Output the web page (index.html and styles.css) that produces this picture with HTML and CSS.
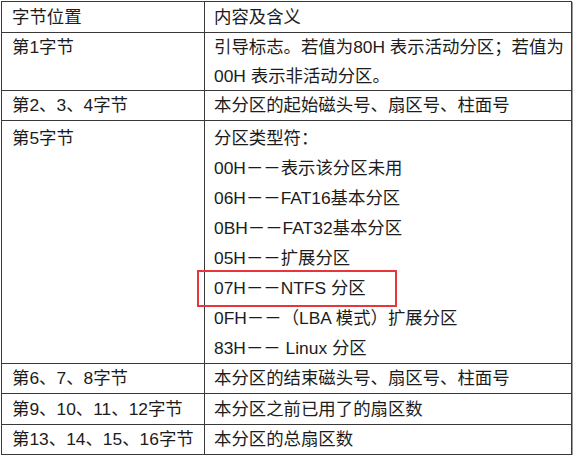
FILE: index.html
```html
<!DOCTYPE html>
<html lang="zh">
<head>
<meta charset="utf-8">
<link rel="stylesheet" href="styles.css">
</head>
<body>
<table class="tbl">
  <colgroup><col class="c1"><col class="c2"></colgroup>
  <tr class="r-head"><td>字节位置</td><td>内容及含义</td></tr>
  <tr class="r-two"><td>第1字节</td><td>引导标志。若值为80H 表示活动分区；若值为<br>00H 表示非活动分区。</td></tr>
  <tr class="r-a"><td>第2、3、4字节</td><td>本分区的起始磁头号、扇区号、柱面号</td></tr>
  <tr class="r-list"><td>第5字节</td><td>
    <div class="line">分区类型符：</div>
    <div class="line">00H－－表示该分区未用</div>
    <div class="line">06H－－FAT16基本分区</div>
    <div class="line">0BH－－FAT32基本分区</div>
    <div class="line">05H－－扩展分区</div>
    <div class="line mark">07H－－NTFS 分区<span class="box"></span></div>
    <div class="line">0FH－－（LBA 模式）扩展分区</div>
    <div class="line">83H－－ Linux 分区</div>
  </td></tr>
  <tr class="r-a"><td>第6、7、8字节</td><td>本分区的结束磁头号、扇区号、柱面号</td></tr>
  <tr class="r-b"><td>第9、10、11、12字节</td><td>本分区之前已用了的扇区数</td></tr>
  <tr class="r-a"><td>第13、14、15、16字节</td><td>本分区的总扇区数</td></tr>
</table>
</body>
</html>
```
FILE: styles.css
```css
html, body {
  margin: 0;
  padding: 0;
  background: #ffffff;
}
body {
  padding: 1px 0 0 1px;
  font-family: "Liberation Sans", "Noto Sans CJK SC", sans-serif;
  font-size: 17.4px;
  color: #1c1c1c;
}
.tbl {
  border-collapse: collapse;
  table-layout: fixed;
  width: 570px;
  box-shadow: 1px 1px 0 #9a9a9a;
}
.c1 { width: 203px; }
.c2 { width: 367px; }
.tbl td {
  border: 1px solid #3a3a3a;
  padding: 0 0 0 10px;
  vertical-align: top;
  line-height: 29px;
  white-space: nowrap;
}
.tbl td + td { padding-left: 9px; }
.r-head td { line-height: 30px; }
.r-two td { line-height: 28.5px; }
.r-a td { line-height: 29px; }
.r-b td { line-height: 30px; }
.r-list td { padding-top: 2px; line-height: 30px; }
.line { height: 30px; }
.mark { position: relative; }
.box {
  position: absolute;
  left: -17px;
  top: -3px;
  width: 196px;
  height: 33px;
  border: 2px solid #e8353b;
}
```
